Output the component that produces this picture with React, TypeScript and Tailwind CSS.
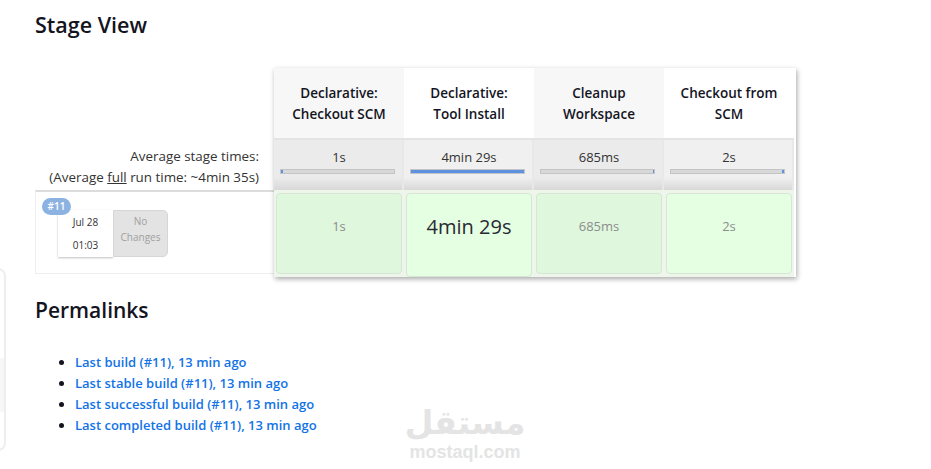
const FONT = "font-['Open_Sans','Noto_Sans',sans-serif]";

const STAGES = [
  { name: ['Declarative:', 'Checkout SCM'], avg: '1s', fill: 'w-[2px]', time: '1s', alt: true, fillLeft: true },
  { name: ['Declarative:', 'Tool Install'], avg: '4min 29s', fill: 'w-full', time: '4min 29s', alt: false, fillLeft: false },
  { name: ['Cleanup', 'Workspace'], avg: '685ms', fill: 'w-[1px]', time: '685ms', alt: true, fillLeft: false },
  { name: ['Checkout from', 'SCM'], avg: '2s', fill: 'w-[2px]', time: '2s', alt: false, fillLeft: false },
];

const PERMALINKS = [
  'Last build (#11), 13 min ago',
  'Last stable build (#11), 13 min ago',
  'Last successful build (#11), 13 min ago',
  'Last completed build (#11), 13 min ago',
];

const StageColumn = ({ stage }: { stage: (typeof STAGES)[number] }) => {
  const big = stage.time === '4min 29s';
  return (
    <div className="flex flex-col w-[130px]">
      {/* Name */}
      <div
        className={`h-[70px] pt-[2px] flex flex-col items-center justify-center text-[13.5px] leading-[21px] font-semibold text-[#14141f] ${
          stage.alt ? 'bg-[#f7f7f7]' : 'bg-white'
        }`}
      >
        {stage.name.map((line) => (
          <span key={line}>{line}</span>
        ))}
      </div>

      {/* Average */}
      <div
        className={`h-[52px] flex flex-col items-center border-t-2 border-[#e4e4e4] bg-gradient-to-b from-[75%] to-[#d8d8d8] shadow-[inset_-2px_0_0_#e8e8e8] ${
          stage.alt ? 'from-[#ebebeb]' : 'from-[#f0f0f0]'
        }`}
      >
        <span className="mt-[7px] text-[13px] leading-[20px] text-[#333]">{stage.avg}</span>
        <div
          className={`mt-[2px] self-start ml-[6px] w-[115px] h-[5px] bg-[#d8d8d8] border border-[#c4c4c4] flex ${
            stage.fillLeft ? 'justify-start' : 'justify-end'
          }`}
        >
          <div className={`h-full bg-[#5b93e0] ${stage.fill}`} />
        </div>
      </div>

      {/* Build cell */}
      <div className="h-[87px] pt-[3px] pl-[2px] bg-[#eef6ec]">
        <div
          className={`w-[126px] flex items-center justify-center rounded-[4px] border border-[#d6e6d4] ${
            big ? 'h-[84px] pb-[17px] text-[20px] text-[#2a2a33]' : 'h-[81px] pb-[14px] text-[13px] text-[#8d8d8d]'
          } ${stage.alt ? 'bg-[#dff7dd]' : 'bg-[#e5ffe3]'}`}
        >
          {stage.time}
        </div>
      </div>
    </div>
  );
};

const App = () => {
  return (
    <div className={`relative w-[931px] h-[469px] overflow-hidden bg-white ${FONT}`}>
      {/* Side panel edge */}
      <div className="absolute left-[-20px] top-[268px] w-[26px] h-[183px] rounded-[8px] border-2 border-[#eeeef2] overflow-hidden">
        <div className="mt-[88px] h-[54px] bg-[#f7f7f8]" />
      </div>

      <div className="pl-[35px] pt-[10px]">
        <h2 className="text-[21.5px] leading-[30px] font-semibold text-[#14141f]">Stage View</h2>

        {/* Stage table */}
        <div className="flex mt-[28px] w-[761px]">
          <div className="w-[239px] flex flex-col pt-[70px] shrink-0">
            <div className="h-[52px] pt-[8px] pr-[15px] text-right text-[13.4px] leading-[21px] text-[#333] whitespace-nowrap">
              <p>Average stage times:</p>
              <p>
                (Average <span className="underline">full</span> run time: ~4min 35s)
              </p>
            </div>
            <div className="h-[84px] border-t-2 border-b border-l border-t-[#dcdcdc] border-b-[#eeeeee] border-l-[#eeeeee] pl-[22px] pt-[18px]">
              <div className="relative flex w-[110px] h-[47px]">
                <span className="absolute left-[-16px] top-[-12px] w-[29px] h-[17px] rounded-full bg-[#8cb2e2] text-white text-[10px] leading-[17px] font-semibold text-center">
                  #11
                </span>
                <div className="w-[55px] bg-white shadow-[0_1px_2px_rgba(0,0,0,0.25)] text-[10px] leading-[23px] text-[#333] text-center pt-[1px]">
                  <p>Jul 28</p>
                  <p>01:03</p>
                </div>
                <div className="w-[55px] rounded-r-[5px] bg-[#e3e3e3] border border-[#d6d6d6] text-[10px] leading-[16px] text-[#a0a0a0] text-center pt-[2px]">
                  <p>No</p>
                  <p>Changes</p>
                </div>
              </div>
            </div>
          </div>

          <div className="flex w-[522px] shadow-[1px_2px_5px_rgba(0,0,0,0.35)]">
            {STAGES.map((stage) => (
              <StageColumn key={stage.avg} stage={stage} />
            ))}
          </div>
        </div>

        {/* Permalinks */}
        <h2 className="mt-[18px] text-[21px] leading-[30px] font-semibold text-[#14141f]">Permalinks</h2>
        <ul className="mt-[27px] pl-[40px] list-disc text-[13px] leading-[21px] font-semibold text-[#14141f]">
          {PERMALINKS.map((link) => (
            <li key={link}>
              <a href="#" className="text-[#1273e6]">
                {link}
              </a>
            </li>
          ))}
        </ul>
      </div>

      {/* Watermark */}
      <div className="absolute left-[406px] top-[403px] w-[118px] flex flex-col items-center text-[#e4e4e4] font-bold font-['DejaVu_Sans',sans-serif]">
        <span dir="rtl" className="text-[33px] leading-[40px]">مستقل</span>
        <span className="text-[18px] leading-[18px] font-['Liberation_Sans',sans-serif]">mostaql.com</span>
      </div>
    </div>
  );
};

export default App;
